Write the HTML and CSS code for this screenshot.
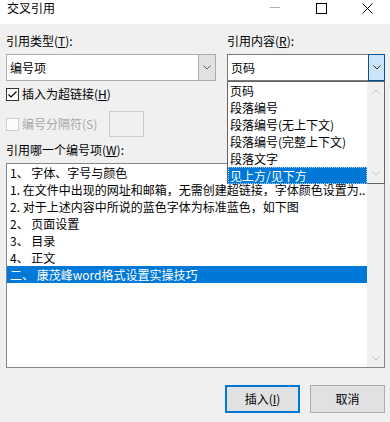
FILE: index.html
```
<!DOCTYPE html>
<html lang="zh-CN">
    <head>
        <meta charset="UTF-8" />
        <link rel="stylesheet" href="styles.css">
    </head>
    <body>
        <div class="titlebar">
            <span class="title">交叉引用</span>
            <div class="winctl">
                <span class="ctl"><svg width="10" height="10" viewBox="0 0 10 10"><line x1="0" y1="4.5" x2="10" y2="4.5" stroke="#b0b0b0" stroke-width="1"/></svg></span>
                <span class="ctl"><svg width="11" height="11" viewBox="0 0 11 11"><rect x="0.5" y="0.5" width="10" height="10" fill="none" stroke="#000" stroke-width="1"/></svg></span>
                <span class="ctl"><svg width="11" height="11" viewBox="0 0 11 11"><path d="M0.5 0.5 L10.5 10.5 M10.5 0.5 L0.5 10.5" stroke="#000" stroke-width="1"/></svg></span>
            </div>
        </div>
        <div class="dlg">
            <div class="pickers">
                <div class="col col_left">
                    <div class="label">引用类型(<u>T</u>):</div>
                    <div class="combo">
                        <span class="val">编号项</span>
                        <span class="arrow"><svg width="8" height="5" viewBox="0 0 8 5"><path d="M0.5 0.5 L4 4 L7.5 0.5" fill="none" stroke="#606060"/></svg></span>
                    </div>
                </div>
                <div class="col col_right">
                    <div class="label">引用内容(<u>R</u>):</div>
                    <div class="combo combo_open">
                        <span class="val">页码</span>
                        <span class="arrow arrow_hot"><svg width="8" height="5" viewBox="0 0 8 5"><path d="M0.5 0.5 L4 4 L7.5 0.5" fill="none" stroke="#333"/></svg></span>
                        <div class="droplist">
                            <div class="drop_items">
                                <div class="item">页码</div>
                                <div class="item">段落编号</div>
                                <div class="item">段落编号(无上下文)</div>
                                <div class="item">段落编号(完整上下文)</div>
                                <div class="item">段落文字</div>
                                <div class="item item_sel">见上方/见下方</div>
                            </div>
                            <div class="vscroll">
                                <svg width="8" height="5" viewBox="0 0 8 5"><path d="M0.5 4.5 L4 1 L7.5 4.5" fill="none" stroke="#c2c2c2"/></svg>
                                <svg width="8" height="5" viewBox="0 0 8 5"><path d="M0.5 0.5 L4 4 L7.5 0.5" fill="none" stroke="#c2c2c2"/></svg>
                            </div>
                        </div>
                    </div>
                </div>
            </div>

            <div class="check_row">
                <span class="box"><svg width="11" height="11" viewBox="0 0 11 11"><path d="M1.5 5.5 L4 8 L9.5 2.5" fill="none" stroke="#000" stroke-width="1.2"/></svg></span>
                <span>插入为超链接(<u>H</u>)</span>
            </div>
            <div class="sep_row">
                <span class="box box_off"></span>
                <span class="off">编号分隔符(S)</span>
                <span class="sep_input"></span>
            </div>

            <div class="label label_list">引用哪一个编号项(<u>W</u>):</div>
            <div class="listbox">
                <div class="rows">
                    <div class="row">1、 字体、字号与颜色</div>
                    <div class="row">1. 在文件中出现的网址和邮箱，无需创建超链接，字体颜色设置为..</div>
                    <div class="row">2. 对于上述内容中所说的蓝色字体为标准蓝色，如下图</div>
                    <div class="row">2、 页面设置</div>
                    <div class="row">3、 目录</div>
                    <div class="row">4、 正文</div>
                    <div class="row row_sel">二、 康茂峰word格式设置实操技巧</div>
                </div>
                <div class="vscroll">
                    <svg width="8" height="5" viewBox="0 0 8 5"><path d="M0.5 4.5 L4 1 L7.5 4.5" fill="none" stroke="#c2c2c2"/></svg>
                    <svg width="8" height="5" viewBox="0 0 8 5"><path d="M0.5 0.5 L4 4 L7.5 0.5" fill="none" stroke="#c2c2c2"/></svg>
                </div>
            </div>

            <div class="buttons">
                <span class="btn btn_default">插入(<u>I</u>)</span>
                <span class="btn">取消</span>
            </div>
        </div>
    </body>
</html>
```
FILE: styles.css
```
html, body {
    margin: 0;
    padding: 0;
}
body {
    width: 390px;
    height: 422px;
    overflow: hidden;
    background-color: #f0f0f0;
    color: #000;
    font-family: "Noto Sans CJK SC", "Noto Sans", sans-serif;
    font-size: 12px;
    line-height: 16px;
}
u { text-decoration: underline; text-underline-offset: 1px; }

.titlebar {
    height: 24px;
    background-color: #fff;
    display: flex;
    align-items: flex-start;
    justify-content: space-between;
}
.title { padding-left: 7px; line-height: 16px; }
.winctl { display: flex; }
.ctl {
    width: 46px;
    height: 16px;
    display: flex;
    justify-content: center;
    padding-top: 3px;
}

.dlg { padding: 9px 5px 0 6px; }
.pickers { display: flex; gap: 11px; }
.col_left { width: 210px; }
.col_right { width: 158px; }
.label { height: 16px; margin-bottom: 5px; }

.combo {
    position: relative;
    height: 27px;
    box-sizing: border-box;
    border: 1px solid #adadad;
    background-color: #fff;
    display: flex;
    align-items: center;
}
.combo .val { flex: 1; padding-left: 3px; }
.arrow {
    width: 17px;
    align-self: stretch;
    box-sizing: border-box;
    border-left: 1px solid #adadad;
    background-color: #e1e1e1;
    display: flex;
    align-items: center;
    justify-content: center;
}
.combo_open { border-color: #7a7a7a; }
.arrow_hot {
    margin: -1px -1px -1px 0;
    width: 17px;
    border: 1px solid #005499;
    background-color: #cce4f7;
}

.droplist {
    position: absolute;
    top: 26px;
    left: -1px;
    width: 158px;
    height: 103px;
    box-sizing: border-box;
    border: 1px solid #646464;
    background-color: #fff;
    display: flex;
    z-index: 2;
}
.drop_items { flex: 1; }
.item { height: 17px; line-height: 17px; padding-left: 2px; }
.item_sel {
    background-color: #0078d7;
    color: #fff;
    outline: 1px dotted #9fc7ee;
    outline-offset: -1px;
}
.vscroll {
    width: 17px;
    background-color: #f0f0f0;
    display: flex;
    flex-direction: column;
    justify-content: space-between;
    align-items: center;
    padding: 7px 0;
    box-sizing: border-box;
}

.check_row, .sep_row {
    display: flex;
    align-items: center;
}
.check_row { margin-top: 6px; height: 14px; gap: 3px; }
.sep_row { margin-top: 10px; height: 26px; gap: 3px; }
.box {
    width: 13px;
    height: 13px;
    box-sizing: border-box;
    border: 1px solid #333;
    background-color: #fff;
    display: flex;
    align-items: center;
    justify-content: center;
}
.box_off { border-color: #cccccc; background-color: #fcfcfc; }
.off { color: #a8a8a8; }
.sep_input {
    width: 35px;
    height: 26px;
    box-sizing: border-box;
    border: 1px solid #cccccc;
    margin-left: 9px;
}

.label_list { margin-top: 5px; margin-bottom: 5px; }
.listbox {
    height: 205px;
    width: 379px;
    box-sizing: border-box;
    border: 1px solid #828790;
    background-color: #fff;
    display: flex;
}
.rows { flex: 1; overflow: hidden; }
.row {
    height: 17px;
    line-height: 17px;
    padding-left: 3px;
    white-space: nowrap;
    overflow: hidden;
}
.row_sel { background-color: #0078d7; color: #fff; }
.listbox .vscroll { padding: 7px 0 6px 0; }

.buttons {
    margin-top: 17px;
    display: flex;
    justify-content: flex-end;
    gap: 10px;
}
.btn {
    width: 75px;
    height: 28px;
    box-sizing: border-box;
    border: 1px solid #adadad;
    background-color: #e1e1e1;
    display: flex;
    align-items: center;
    justify-content: center;
}
.btn_default { border: 2px solid #0078d7; }
```
